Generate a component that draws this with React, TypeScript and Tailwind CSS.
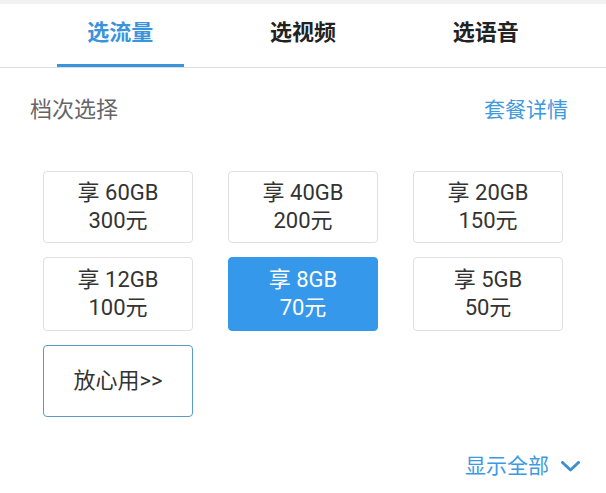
import React, { useState } from 'react'

const tabs = ['选流量', '选视频', '选语音']

const plans = [
    { gb: '60GB', price: '300元' },
    { gb: '40GB', price: '200元' },
    { gb: '20GB', price: '150元' },
    { gb: '12GB', price: '100元' },
    { gb: '8GB', price: '70元' },
    { gb: '5GB', price: '50元' },
]

export default function App() {
    const [tab, setTab] = useState<number>(0)
    const [selected, setSelected] = useState<number>(4)

    return (
        <div className="w-[606px] min-h-[493px] bg-white" style={{ fontFamily: 'Roboto, "Noto Sans CJK SC", sans-serif' }}>
            <div className="h-[4px] bg-[#f2f2f2]" />

            <div className="grid grid-cols-3 px-[29px] h-[64px] border-b border-[#dddddd]">
                {tabs.map((t, i) => (
                    <button
                        key={t}
                        onClick={() => setTab(i)}
                        className="flex flex-col items-center justify-between"
                    >
                        <span className={`mt-[15px] text-[22px] leading-[28px] font-bold ${i === tab ? 'text-[#3a94dc]' : 'text-[#222222]'}`}>
                            {t}
                        </span>
                        <span className={`w-[127px] h-[3px] ${i === tab ? 'bg-[#3a94dc]' : 'bg-transparent'}`} />
                    </button>
                ))}
            </div>

            <div className="flex items-center justify-between pl-[30px] pr-[38px] pt-[29px]">
                <span className="text-[22px] leading-[26px] text-[#666666]">档次选择</span>
                <span className="text-[21px] leading-[26px] text-[#3d9ae0]">套餐详情</span>
            </div>

            <div className="grid grid-cols-[150px_150px_150px] grid-rows-[72px_74px_72px] gap-x-[35px] gap-y-[14px] pl-[43px] mt-[48px]">
                {plans.map((p, i) => (
                    <button
                        key={p.gb}
                        onClick={() => setSelected(i)}
                        className={`flex flex-col items-center justify-center rounded-[4px] text-[22px] leading-[28px] ${
                            i === selected
                                ? 'bg-[#3598ea] text-white border border-[#3598ea]'
                                : 'bg-white text-[#333333] border border-[#e0e0e0]'
                        }`}
                    >
                        <span>享 {p.gb}</span>
                        <span>{p.price}</span>
                    </button>
                ))}
                <button className="flex items-center justify-center rounded-[4px] border-[1.5px] border-[#5a9cc9] text-[22px] leading-[28px] text-[#333333]">
                    放心用&gt;&gt;
                </button>
            </div>

            <div className="flex items-center justify-end gap-[12px] pr-[26px] mt-[37px]">
                <span className="text-[21px] leading-[24px] text-[#3d9ae0]">显示全部</span>
                <svg width="19" height="11" viewBox="0 0 19 11" fill="none">
                    <path d="M1.5 1.5 L9.5 9 L17.5 1.5" stroke="#3d8fd1" strokeWidth="3" strokeLinecap="round" strokeLinejoin="round" />
                </svg>
            </div>
        </div>
    )
}
